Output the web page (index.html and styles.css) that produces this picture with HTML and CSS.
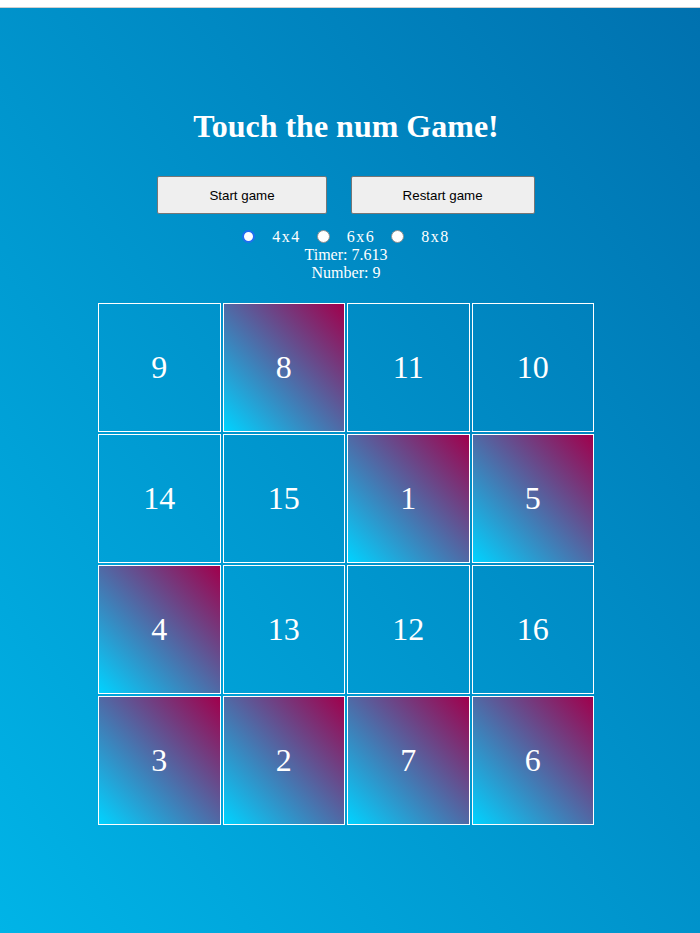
FILE: index.html
```html
<!DOCTYPE html>
<html lang="en">
<head>
<meta charset="utf-8">
<title>Touch the num Game!</title>
<link rel="stylesheet" href="styles.css">
</head>
<body>
<div class="topbar"></div>
<main class="app">
  <h1 class="title">Touch the num Game!</h1>
  <div class="buttons">
    <button class="btn" type="button">Start game</button>
    <button class="btn" type="button">Restart game</button>
  </div>
  <div class="sizes">
    <span class="radio radio-active"></span><span class="size-label">4x4</span>
    <span class="radio"></span><span class="size-label">6x6</span>
    <span class="radio"></span><span class="size-label">8x8</span>
  </div>
  <div class="status">Timer: 7.613</div>
  <div class="status">Number: 9</div>
  <div class="board">
    <div class="tile">9</div>
    <div class="tile done">8</div>
    <div class="tile">11</div>
    <div class="tile">10</div>
    <div class="tile">14</div>
    <div class="tile">15</div>
    <div class="tile done">1</div>
    <div class="tile done">5</div>
    <div class="tile done">4</div>
    <div class="tile">13</div>
    <div class="tile">12</div>
    <div class="tile">16</div>
    <div class="tile done">3</div>
    <div class="tile done">2</div>
    <div class="tile done">7</div>
    <div class="tile done">6</div>
  </div>
</main>
</body>
</html>
```
FILE: styles.css
```css
html, body {
  margin: 0;
  padding: 0;
  background: #ffffff;
}

body {
  font-family: "Liberation Serif", "Times New Roman", serif;
  color: #ffffff;
}

.topbar {
  height: 7px;
  background: #ffffff;
  border-bottom: 1px solid #cfcfcf;
}

.app {
  min-height: 925px;
  box-sizing: border-box;
  padding: 100px 8px 0 0;
  background: linear-gradient(to top right, #00b4e7, #0071af);
  display: flex;
  flex-direction: column;
  align-items: center;
}

.title {
  margin: 0;
  font-size: 32px;
  line-height: 36px;
  font-weight: bold;
  color: #ffffff;
}

.buttons {
  margin-top: 32px;
  display: flex;
  gap: 24px;
}

.btn {
  height: 38px;
  box-sizing: border-box;
  padding: 0 51px;
  font-family: "Liberation Sans", Arial, sans-serif;
  font-size: 13.33px;
  color: #000000;
  background: #efefef;
  border: 1px solid #767676;
  border-radius: 2px;
}

.sizes {
  margin-top: 14px;
  height: 18px;
  display: flex;
  align-items: center;
  font-size: 16px;
  line-height: 18px;
}

.radio {
  width: 13px;
  height: 13px;
  box-sizing: border-box;
  border-radius: 50%;
  background: #ffffff;
  border: 1px solid #8f8f8f;
  margin-right: 17px;
  margin-top: -1px;
}

.radio-active {
  border: 2px solid #1f6ff0;
}

.size-label {
  letter-spacing: 1.5px;
  margin-right: 16px;
}

.size-label:last-child {
  margin-right: 0;
}

.status {
  font-size: 16px;
  line-height: 18px;
}

.board {
  margin-top: 21px;
  width: 496px;
  display: grid;
  grid-template-columns: repeat(4, 1fr);
  grid-auto-rows: 129px;
  gap: 2px;
}

.tile {
  box-sizing: border-box;
  border: 1px solid #ffffff;
  display: flex;
  align-items: center;
  justify-content: center;
  font-size: 32px;
  color: #ffffff;
}

.tile.done {
  background: linear-gradient(to top right, #00d3ff, #a0004c);
}
```
